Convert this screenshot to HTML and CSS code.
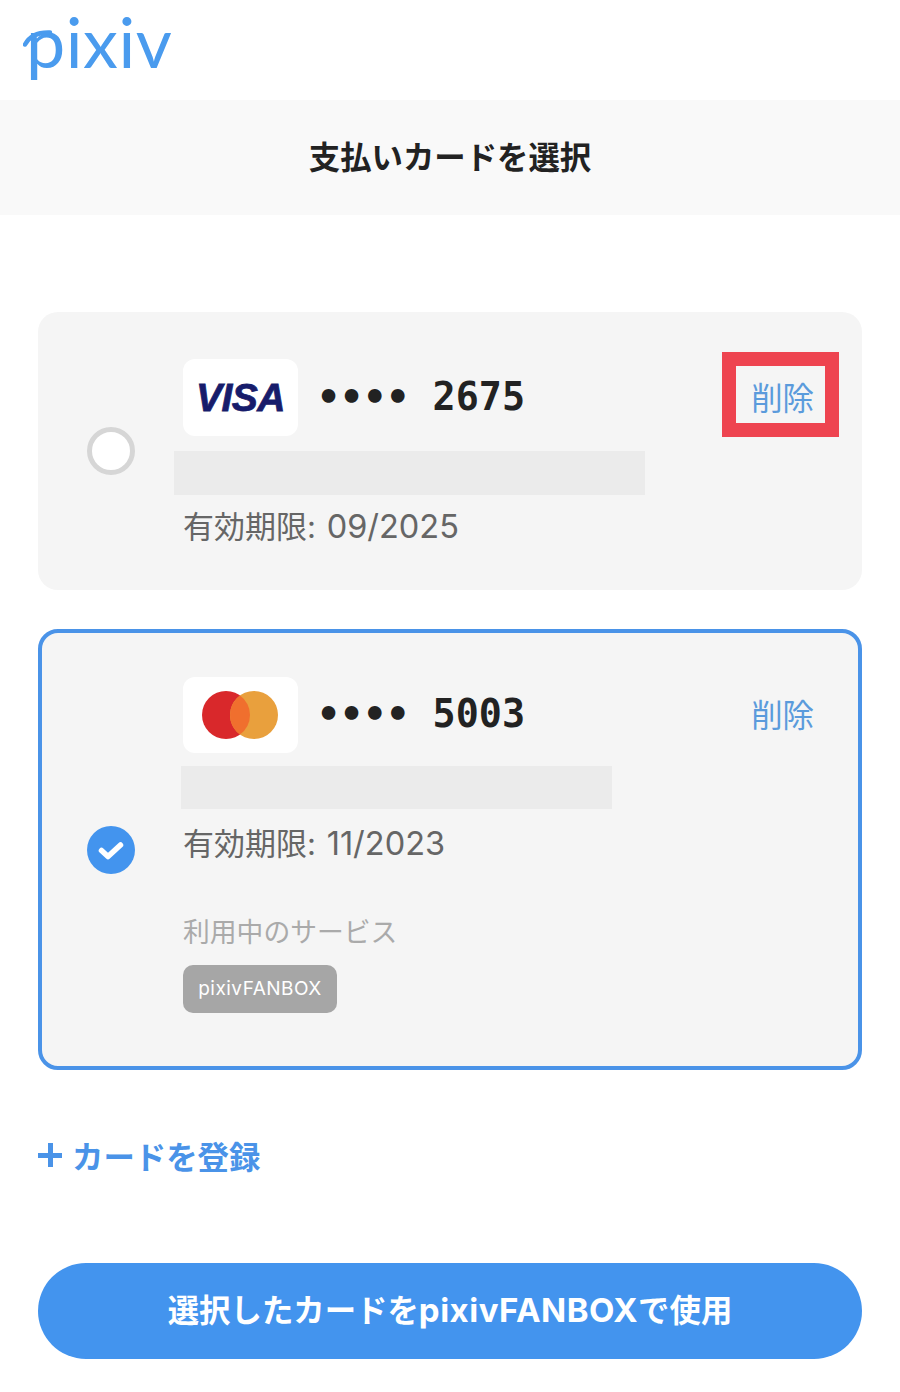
FILE: index.html
```html
<!DOCTYPE html>
<html lang="ja">
<head>
    <meta charset="UTF-8">
    <meta name="viewport" content="width=device-width, initial-scale=1.0">
    <title>支払いカードを選択</title>
    <link rel="stylesheet" href="styles.css">
</head>
<body>
    <header class="site-header">
        <span class="logo">pixiv</span>
        <svg class="logo-swash" viewBox="0 0 30 24" width="30" height="24">
            <path d="M2 16.500C6 9 14 4 27 4.500" fill="none" stroke="#4a9bee" stroke-width="4.500" stroke-linecap="round"/>
        </svg>
    </header>

    <h1 class="page-title">支払いカードを選択</h1>

    <main class="content">
        <section class="card card-first">
            <span class="radio"></span>
            <div class="card-body">
                <div class="card-top">
                    <span class="brand"><span class="visa">VISA</span></span>
                    <span class="number">•••• 2675</span>
                    <a class="delete" href="#">削除<span class="highlight"></span></a>
                </div>
                <div class="masked masked-first"></div>
                <p class="expiry">有効期限: <span class="expiry-date">09/2025</span></p>
            </div>
        </section>

        <section class="card card-selected">
            <span class="radio radio-on">
                <svg viewBox="0 0 48 48" width="48" height="48">
                    <path d="M14.500 24.500l6.500 6L33.500 19" fill="none" stroke="#fff" stroke-width="5.500" stroke-linecap="round" stroke-linejoin="round"/>
                </svg>
            </span>
            <div class="card-body">
                <div class="card-top">
                    <span class="brand">
                        <svg class="mastercard" viewBox="0 0 76 48" width="76" height="48">
                            <circle cx="24" cy="24" r="24" fill="#d9282b"/>
                            <circle cx="52" cy="24" r="24" fill="#e9a03d"/>
                            <path d="M38 4.500a24 24 0 0 1 0 39a24 24 0 0 1 0-39z" fill="#f06f2e"/>
                        </svg>
                    </span>
                    <span class="number">•••• 5003</span>
                    <a class="delete" href="#">削除</a>
                </div>
                <div class="masked masked-second"></div>
                <p class="expiry">有効期限: <span class="expiry-date">11/2023</span></p>
                <p class="service-label">利用中のサービス</p>
                <span class="service-badge">pixivFANBOX</span>
            </div>
        </section>

        <a class="add-card" href="#"><span class="plus"></span>カードを登録</a>

        <button class="submit" type="button">選択したカードを<span class="submit-latin">pixivFANBOX</span>で使用</button>
    </main>
</body>
</html>
```

FILE: styles.css
```css
body {
    font-family: Inter, "Noto Sans CJK JP", sans-serif;
    background: #fff;
    margin: 0;
    padding: 0;
}

.site-header {
    position: relative;
    height: 100px;
    padding-left: 26px;
}

.logo {
    display: block;
    font-family: Lato, sans-serif;
    font-size: 70px;
    line-height: 82px;
    letter-spacing: 0.5px;
    color: #4a9bee;
}

.logo-swash {
    position: absolute;
    left: 23px;
    top: 28px;
}

.page-title {
    margin: 0;
    height: 115px;
    line-height: 111px;
    text-align: center;
    font-family: "Noto Sans CJK JP", sans-serif;
    font-size: 31.4px;
    font-weight: 700;
    color: #222;
    background: #f9f9f9;
}

.content {
    padding: 97px 38px 0;
}

.card {
    display: grid;
    grid-template-columns: 48px 1fr;
    column-gap: 48px;
    align-items: center;
    box-sizing: border-box;
    background: #f5f5f5;
    border-radius: 20px;
    padding-left: 49px;
    padding-right: 48px;
}

.card-first {
    height: 278px;
}

.card-first .card-body {
    padding-top: 47px;
}

.card-first .number {
    margin-bottom: 2px;
}

.card-first .expiry {
    margin-top: 11px;
}

.card-selected {
    height: 441px;
    margin-top: 39px;
    padding-left: 45px;
    padding-right: 44px;
    border: 4px solid #4a93e8;
}

.card-selected .card-body {
    padding-top: 44px;
}

.card-selected .brand {
    height: 76px;
}

.card-selected .expiry {
    margin-top: 14px;
}

.radio {
    display: block;
    box-sizing: border-box;
    width: 48px;
    height: 48px;
    border-radius: 50%;
    background: #fff;
    border: 5px solid #d6d6d6;
}

.radio-on {
    background: #4394ee;
    border: 0;
}

.radio-on svg {
    display: block;
}

.card-body {
    align-self: start;
}

.card-top {
    display: flex;
    align-items: center;
}

.brand {
    display: flex;
    align-items: center;
    justify-content: center;
    width: 115px;
    height: 77px;
    background: #fff;
    border-radius: 12px;
}

.mastercard {
    margin-right: 2px;
}

.visa {
    font-family: "Liberation Sans", sans-serif;
    font-size: 39px;
    font-weight: 700;
    font-style: italic;
    letter-spacing: -0.5px;
    color: #171c6b;
    -webkit-text-stroke: 0.8px #171c6b;
}

.number {
    margin: 0 0 4px 19px;
    font-family: "DejaVu Sans Mono", monospace;
    font-size: 38.4px;
    font-weight: 700;
    color: #222;
}

.delete {
    position: relative;
    margin: 0 0 2px auto;
    font-family: "Noto Sans CJK JP", sans-serif;
    font-size: 31.4px;
    line-height: 46px;
    color: #5b9bdc;
    text-decoration: none;
}

/* annotation drawn on the screenshot */
.highlight {
    position: absolute;
    left: -29px;
    right: -25px;
    top: -22px;
    bottom: -17px;
    border: 14px solid #ee4450;
}

.masked {
    background: #ebebeb;
}

.masked-first {
    width: 471px;
    height: 44px;
    margin: 15px 0 0 -9px;
}

.masked-second {
    width: 431px;
    height: 43px;
    margin: 13px 0 0 -2px;
}

.expiry {
    margin: 0;
    font-size: 31px;
    line-height: 42px;
    color: #666;
}

.expiry-date {
    margin-left: 2px;
    font-size: 32.500px;
}

.service-label {
    margin: 47px 0 0;
    font-size: 26.800px;
    line-height: 40px;
    color: #aaa;
}

.service-badge {
    display: inline-block;
    margin-top: 13px;
    width: 154px;
    height: 48px;
    line-height: 48px;
    text-align: center;
    font-size: 19px;
    letter-spacing: 0.5px;
    color: #fff;
    background: #a6a6a6;
    border-radius: 10px;
}

.add-card {
    display: flex;
    align-items: center;
    margin-top: 60px;
    height: 50px;
    font-family: "Noto Sans CJK JP", sans-serif;
    font-size: 31.4px;
    font-weight: 700;
    color: #4a93e8;
    text-decoration: none;
}

.plus {
    width: 24px;
    height: 24px;
    margin-right: 10px;
    background:
        linear-gradient(#4a93e8, #4a93e8) center / 100% 5px no-repeat,
        linear-gradient(#4a93e8, #4a93e8) center / 5px 100% no-repeat;
}

.submit {
    display: block;
    width: 100%;
    height: 96px;
    margin-top: 83px;
    padding: 0 0 5px;
    border: 0;
    border-radius: 48px;
    background: #4394ee;
    color: #fff;
    font-family: Inter, "Noto Sans CJK JP", sans-serif;
    font-size: 31.4px;
    font-weight: 700;
}

.submit-latin {
    font-size: 33px;
    letter-spacing: 0.5px;
}
```
